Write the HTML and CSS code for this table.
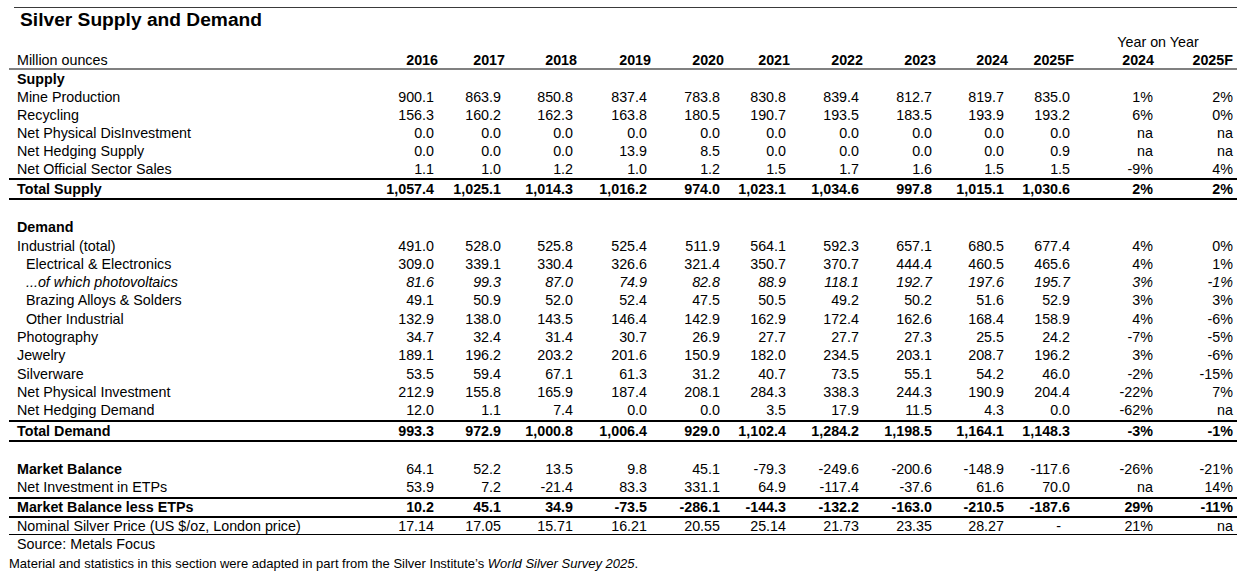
FILE: index.html
```html
<!DOCTYPE html>
<html lang="en">
<head>
<meta charset="utf-8">
<title>Silver Supply and Demand</title>
<link rel="stylesheet" href="styles.css">
</head>
<body>
<div class="page">
  <div class="toprule"></div>
  <h1 class="title">Silver Supply and Demand</h1>

  <div class="sheet">
    <div class="row yoyhead"><span class="yoy">Year on Year</span></div>
    <div class="row head">
      <span class="lbl">Million ounces</span>
      <span>2016</span><span>2017</span><span>2018</span><span>2019</span><span>2020</span><span>2021</span><span>2022</span><span>2023</span><span>2024</span><span>2025F</span><span>2024</span><span>2025F</span>
    </div>

    <div class="row sup bold"><span class="lbl">Supply</span></div>
    <div class="row sup"><span class="lbl">Mine Production</span><span>900.1</span><span>863.9</span><span>850.8</span><span>837.4</span><span>783.8</span><span>830.8</span><span>839.4</span><span>812.7</span><span>819.7</span><span>835.0</span><span class="p1">1%</span><span class="p2">2%</span></div>
    <div class="row sup"><span class="lbl">Recycling</span><span>156.3</span><span>160.2</span><span>162.3</span><span>163.8</span><span>180.5</span><span>190.7</span><span>193.5</span><span>183.5</span><span>193.9</span><span>193.2</span><span class="p1">6%</span><span class="p2">0%</span></div>
    <div class="row sup"><span class="lbl">Net Physical DisInvestment</span><span>0.0</span><span>0.0</span><span>0.0</span><span>0.0</span><span>0.0</span><span>0.0</span><span>0.0</span><span>0.0</span><span>0.0</span><span>0.0</span><span class="p1">na</span><span class="p2">na</span></div>
    <div class="row sup"><span class="lbl">Net Hedging Supply</span><span>0.0</span><span>0.0</span><span>0.0</span><span>13.9</span><span>8.5</span><span>0.0</span><span>0.0</span><span>0.0</span><span>0.0</span><span>0.9</span><span class="p1">na</span><span class="p2">na</span></div>
    <div class="row sup"><span class="lbl">Net Official Sector Sales</span><span>1.1</span><span>1.0</span><span>1.2</span><span>1.0</span><span>1.2</span><span>1.5</span><span>1.7</span><span>1.6</span><span>1.5</span><span>1.5</span><span class="p1">-9%</span><span class="p2">4%</span></div>
    <div class="row sup total"><span class="lbl">Total Supply</span><span>1,057.4</span><span>1,025.1</span><span>1,014.3</span><span>1,016.2</span><span>974.0</span><span>1,023.1</span><span>1,034.6</span><span>997.8</span><span>1,015.1</span><span>1,030.6</span><span class="p1">2%</span><span class="p2">2%</span></div>

    <div class="spacer"></div>

    <div class="row bold"><span class="lbl">Demand</span></div>
    <div class="row"><span class="lbl">Industrial (total)</span><span>491.0</span><span>528.0</span><span>525.8</span><span>525.4</span><span>511.9</span><span>564.1</span><span>592.3</span><span>657.1</span><span>680.5</span><span>677.4</span><span class="p1">4%</span><span class="p2">0%</span></div>
    <div class="row"><span class="lbl sub">Electrical &amp; Electronics</span><span>309.0</span><span>339.1</span><span>330.4</span><span>326.6</span><span>321.4</span><span>350.7</span><span>370.7</span><span>444.4</span><span>460.5</span><span>465.6</span><span class="p1">4%</span><span class="p2">1%</span></div>
    <div class="row ital"><span class="lbl sub">...of which photovoltaics</span><span>81.6</span><span>99.3</span><span>87.0</span><span>74.9</span><span>82.8</span><span>88.9</span><span>118.1</span><span>192.7</span><span>197.6</span><span>195.7</span><span class="p1">3%</span><span class="p2">-1%</span></div>
    <div class="row"><span class="lbl sub">Brazing Alloys &amp; Solders</span><span>49.1</span><span>50.9</span><span>52.0</span><span>52.4</span><span>47.5</span><span>50.5</span><span>49.2</span><span>50.2</span><span>51.6</span><span>52.9</span><span class="p1">3%</span><span class="p2">3%</span></div>
    <div class="row"><span class="lbl sub">Other Industrial</span><span>132.9</span><span>138.0</span><span>143.5</span><span>146.4</span><span>142.9</span><span>162.9</span><span>172.4</span><span>162.6</span><span>168.4</span><span>158.9</span><span class="p1">4%</span><span class="p2">-6%</span></div>
    <div class="row"><span class="lbl">Photography</span><span>34.7</span><span>32.4</span><span>31.4</span><span>30.7</span><span>26.9</span><span>27.7</span><span>27.7</span><span>27.3</span><span>25.5</span><span>24.2</span><span class="p1">-7%</span><span class="p2">-5%</span></div>
    <div class="row"><span class="lbl">Jewelry</span><span>189.1</span><span>196.2</span><span>203.2</span><span>201.6</span><span>150.9</span><span>182.0</span><span>234.5</span><span>203.1</span><span>208.7</span><span>196.2</span><span class="p1">3%</span><span class="p2">-6%</span></div>
    <div class="row"><span class="lbl">Silverware</span><span>53.5</span><span>59.4</span><span>67.1</span><span>61.3</span><span>31.2</span><span>40.7</span><span>73.5</span><span>55.1</span><span>54.2</span><span>46.0</span><span class="p1">-2%</span><span class="p2">-15%</span></div>
    <div class="row"><span class="lbl">Net Physical Investment</span><span>212.9</span><span>155.8</span><span>165.9</span><span>187.4</span><span>208.1</span><span>284.3</span><span>338.3</span><span>244.3</span><span>190.9</span><span>204.4</span><span class="p1">-22%</span><span class="p2">7%</span></div>
    <div class="row"><span class="lbl">Net Hedging Demand</span><span>12.0</span><span>1.1</span><span>7.4</span><span>0.0</span><span>0.0</span><span>3.5</span><span>17.9</span><span>11.5</span><span>4.3</span><span>0.0</span><span class="p1">-62%</span><span class="p2">na</span></div>
    <div class="row total"><span class="lbl">Total Demand</span><span>993.3</span><span>972.9</span><span>1,000.8</span><span>1,006.4</span><span>929.0</span><span>1,102.4</span><span>1,284.2</span><span>1,198.5</span><span>1,164.1</span><span>1,148.3</span><span class="p1">-3%</span><span class="p2">-1%</span></div>

    <div class="spacer"></div>

    <div class="row"><span class="lbl bold">Market Balance</span><span>64.1</span><span>52.2</span><span>13.5</span><span>9.8</span><span>45.1</span><span>-79.3</span><span>-249.6</span><span>-200.6</span><span>-148.9</span><span>-117.6</span><span class="p1">-26%</span><span class="p2">-21%</span></div>
    <div class="row netetp"><span class="lbl">Net Investment in ETPs</span><span>53.9</span><span>7.2</span><span>-21.4</span><span>83.3</span><span>331.1</span><span>64.9</span><span>-117.4</span><span>-37.6</span><span>61.6</span><span>70.0</span><span class="p1">na</span><span class="p2">14%</span></div>
    <div class="row mble bold"><span class="lbl">Market Balance less ETPs</span><span>10.2</span><span>45.1</span><span>34.9</span><span>-73.5</span><span>-286.1</span><span>-144.3</span><span>-132.2</span><span>-163.0</span><span>-210.5</span><span>-187.6</span><span class="p1">29%</span><span class="p2">-11%</span></div>
    <div class="row price"><span class="lbl">Nominal Silver Price (US $/oz, London price)</span><span>17.14</span><span>17.05</span><span>15.71</span><span>16.21</span><span>20.55</span><span>25.14</span><span>21.73</span><span>23.35</span><span>28.27</span><span class="dash">-</span><span class="p1">21%</span><span class="p2">na</span></div>

    <div class="source">Source: Metals Focus</div>
  </div>

  <p class="note">Material and statistics in this section were adapted in part from the Silver Institute’s <em>World Silver Survey 2025</em>.</p>
</div>
</body>
</html>
```

FILE: styles.css
```css
* {
  box-sizing: border-box;
}

html, body {
  margin: 0;
  padding: 0;
  background: #ffffff;
}

body {
  font-family: "Liberation Sans", Arial, sans-serif;
  color: #000000;
}

.page {
  width: 1259px;
  padding-top: 7px;
}

.toprule {
  margin-left: 14px;
  width: 1223px;
  height: 1px;
  background: #3a3a3a;
}

.title {
  margin: 1px 0 0 20px;
  font-size: 19.2px;
  font-weight: bold;
  line-height: 22px;
  height: 22px;
}

.sheet {
  margin-left: 9px;
  margin-top: 2px;
  width: 1228px;
  font-size: 14.3px;
}

.row {
  display: grid;
  grid-template-columns: 375px 58px 67px 72px 74px 73px 66px 73px 73px 72px 66px 80px 79px;
  height: 18.3px;
  line-height: 18.3px;
  white-space: nowrap;
}

.row > span {
  text-align: right;
  padding-right: 8px;
}

.row > span.lbl {
  text-align: left;
  padding-left: 8px;
  padding-right: 0;
}

.row > span.lbl.sub {
  padding-left: 17px;
}

.row > span.p1 {
  padding-right: 5px;
}

.row > span.p2 {
  padding-right: 4px;
}

.row > span.dash {
  padding-right: 17px;
}

.yoyhead {
  height: 18px;
  line-height: 18px;
}

.yoyhead .yoy {
  grid-column: 12 / 14;
  text-align: center;
  padding-right: 0;
  padding-left: 1px;
}

.head {
  height: 19px;
  line-height: 16px;
  padding-top: 1px;
  border-bottom: 2px solid #808080;
}

.head > span {
  font-weight: bold;
  padding-right: 4px;
}

.head > span.lbl {
  font-weight: normal;
}

.row.sup {
  height: 18px;
  line-height: 18px;
}

.bold {
  font-weight: bold;
}

.ital {
  font-style: italic;
}

.row.total {
  font-weight: bold;
  border-top: 2px solid #000000;
  border-bottom: 2px solid #000000;
}

.row.sup.total {
  height: 22px;
}

.row.total:not(.sup) {
  height: 22.3px;
}

.spacer {
  height: 18.3px;
}

.row.netetp {
  height: 20.3px;
  border-bottom: 2px solid #000000;
}

.row.mble {
  height: 19px;
  line-height: 17px;
  border-bottom: 2px solid #000000;
}

.row.price {
  height: 17.5px;
  line-height: 16.5px;
  border-bottom: 1px solid #000000;
}

.source {
  padding-left: 8px;
  line-height: 18px;
  height: 18px;
}

.note {
  margin: 1.5px 0 0 9px;
  font-size: 13px;
  line-height: 18px;
}

.note em {
  font-style: italic;
}
```
